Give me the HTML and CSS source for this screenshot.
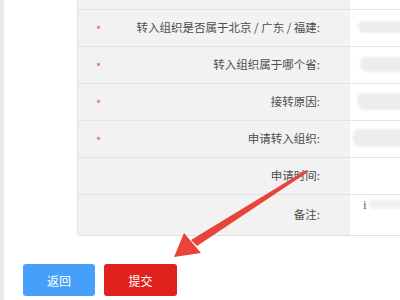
FILE: index.html
```html
<!DOCTYPE html>
<html lang="zh-CN">
<head>
<meta charset="utf-8">
<title>转入申请</title>
<link rel="stylesheet" href="styles.css">
</head>
<body>
<div class="wrap">
  <div class="sidebar"></div>
  <div class="content">
    <div class="table">
      <div class="row row-top"><div class="label"></div><div class="value"></div></div>
      <div class="row">
        <div class="label"><span class="req">*</span><span class="text">转入组织是否属于北京 / 广东 / 福建:</span></div>
        <div class="value"><span class="blob b1"></span></div>
      </div>
      <div class="row">
        <div class="label"><span class="req">*</span><span class="text">转入组织属于哪个省:</span></div>
        <div class="value"><span class="blob b2"></span></div>
      </div>
      <div class="row">
        <div class="label"><span class="req">*</span><span class="text">接转原因:</span></div>
        <div class="value"><span class="blob b3"></span></div>
      </div>
      <div class="row">
        <div class="label"><span class="req">*</span><span class="text">申请转入组织:</span></div>
        <div class="value"><span class="blob b4"></span></div>
      </div>
      <div class="row">
        <div class="label"><span class="text">申请时间:</span></div>
        <div class="value"></div>
      </div>
      <div class="row row-last">
        <div class="label"><span class="text">备注:</span></div>
        <div class="value value-top"><span class="cursor">i</span><span class="blob b6"></span></div>
      </div>
    </div>
    <div class="actions">
      <button class="btn btn-back">返回</button>
      <button class="btn btn-submit">提交</button>
    </div>
  </div>
</div>
<svg class="arrow" width="400" height="300" viewBox="0 0 400 300">
  <polygon points="306,170 308,172 197,246 191,240" fill="#e8443a"/>
  <polygon points="174,257 184,233 201,253" fill="#e8443a"/>
</svg>
</body>
</html>
```

FILE: styles.css
```css
html, body {
  margin: 0;
  padding: 0;
  background: #ffffff;
  overflow: hidden;
}
body {
  width: 400px;
  height: 300px;
  position: relative;
  font-family: "Noto Sans CJK SC", "Noto Sans", sans-serif;
}
.wrap {
  display: flex;
  height: 300px;
}
.sidebar {
  width: 4px;
  flex: none;
  background: #e9e9e9;
}
.content {
  flex: 1;
  min-width: 0;
}
.table {
  margin-left: 73px;
  border-left: 1px solid #e1e1e1;
  border-bottom: 1px solid #e1e1e1;
  border-bottom-left-radius: 4px;
  overflow: hidden;
}
.row {
  display: grid;
  grid-template-columns: 272px 1fr;
  height: 36px;
  border-bottom: 1px solid #e3e3e3;
}
.row-top {
  height: 9px;
}
.row-last {
  height: 40px;
  border-bottom: none;
}
.label {
  background: #f2f2f2;
  display: flex;
  align-items: center;
  padding: 0 30px 3px 18px;
  font-size: 11.5px;
  color: #4e4e4e;
}
.req {
  color: #e0566a;
  font-size: 11px;
  width: 8px;
  margin-top: 4px;
}
.text {
  flex: 1;
  text-align: right;
  white-space: nowrap;
}
.value {
  background: #ffffff;
  display: flex;
  align-items: center;
  overflow: hidden;
}
.value-top {
  align-items: flex-start;
  padding-top: 3px;
}
.blob {
  display: block;
  flex: none;
  background: #ededed;
  border-radius: 6px 2px 2px 8px;
  filter: blur(1px);
  width: 60px;
}
.b1 { margin-left: 8px; height: 12px; margin-bottom: 3px; }
.b2 { margin-left: 10px; height: 15px; margin-bottom: 1px; }
.b3 { margin-left: 7px; height: 17px; margin-bottom: 1px; }
.b4 { margin-left: 3px; height: 18px; margin-bottom: 2px; }
.b6 { margin-left: 2px; height: 9px; margin-top: 2px; background: #f0f0f0; }
.cursor {
  margin-left: 13px;
  font-family: "Liberation Serif", serif;
  font-size: 13px;
  color: #666;
  line-height: 13px;
}
.actions {
  display: flex;
  gap: 9px;
  margin: 28px 0 0 19px;
}
.btn {
  width: 72px;
  height: 32px;
  border: none;
  border-radius: 3px;
  color: #ffffff;
  font-family: "Noto Sans CJK SC", "Noto Sans", sans-serif;
  font-size: 12px;
  padding: 0;
}
.btn-back {
  background: #46a0fa;
}
.btn-submit {
  width: 73px;
  background: #e1211c;
}
.arrow {
  position: absolute;
  left: 0;
  top: 0;
  pointer-events: none;
}
```
